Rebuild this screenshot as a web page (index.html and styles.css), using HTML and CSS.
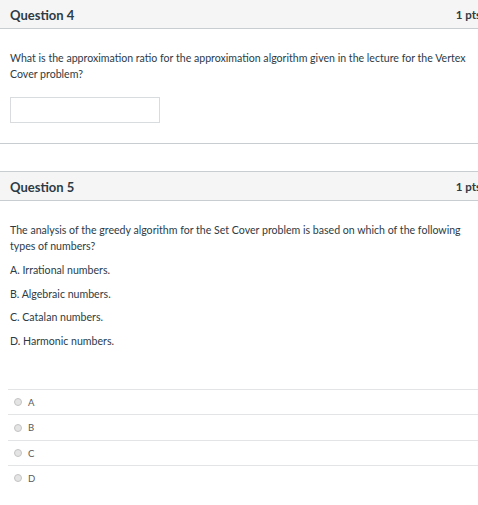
FILE: index.html
```html
<!DOCTYPE html>
<html>
<head>
<meta charset="utf-8">
<link rel="stylesheet" href="styles.css">
</head>
<body>
<div class="page">
  <div class="card first">
    <div class="card-header">
      <span class="q-title">Question 4</span>
      <span class="q-pts">1 pts</span>
    </div>
    <div class="card-body">
      <p class="q-text">What is the approximation ratio for the approximation algorithm given in the lecture for the Vertex Cover problem?</p>
      <div class="answer-input"></div>
    </div>
  </div>

  <div class="card second">
    <div class="card-header">
      <span class="q-title">Question 5</span>
      <span class="q-pts">1 pts</span>
    </div>
    <div class="card-body">
      <p class="q-text">The analysis of the greedy algorithm for the Set Cover problem is based on which of the following types of numbers?</p>
      <div class="choices">
        <p class="choice">A. Irrational numbers.</p>
        <p class="choice">B. Algebraic numbers.</p>
        <p class="choice">C. Catalan numbers.</p>
        <p class="choice">D. Harmonic numbers.</p>
      </div>
      <div class="answers">
        <div class="answer"><span class="radio"></span><span class="label">A</span></div>
        <div class="answer"><span class="radio"></span><span class="label">B</span></div>
        <div class="answer"><span class="radio"></span><span class="label">C</span></div>
        <div class="answer"><span class="radio"></span><span class="label">D</span></div>
      </div>
    </div>
  </div>
</div>
</body>
</html>
```

FILE: styles.css
```css
html, body {
  margin: 0;
  padding: 0;
  background: #ffffff;
  overflow: hidden;
}

body {
  font-family: Lato, "Open Sans", "Liberation Sans", sans-serif;
  color: #2d3b45;
}

.page {
  width: 484px;
  margin-left: -1px;
}

.card {
  border: 1px solid #c7cdd1;
  background: #ffffff;
}

.card.first {
  margin-top: -1px;
}

.card.second {
  margin-top: 27px;
}

.card-header {
  height: 28px;
  background: #f5f5f5;
  border-bottom: 1px solid #c7cdd1;
  display: flex;
  align-items: center;
  justify-content: space-between;
  padding: 0 1px 0 10px;
}

.q-title {
  font-size: 13px;
  font-weight: 700;
  color: #2d3b45;
  padding-top: 1px;
}

.q-pts {
  font-size: 11.5px;
  font-weight: 700;
  color: #2d3b45;
}

.card-body {
  padding: 21px 0 0 10px;
}

.first .card-body {
  padding-bottom: 20px;
}

.q-text {
  margin: 0;
  font-size: 10.6px;
  line-height: 16px;
  padding-right: 6px;
}

.answer-input {
  margin-top: 15px;
  width: 148px;
  height: 24px;
  border: 1px solid #d9dcde;
  background: #ffffff;
}

.choices {
  margin-top: 8px;
  display: flex;
  flex-direction: column;
  gap: 7.7px;
}

.choice {
  margin: 0;
  font-size: 10.6px;
  line-height: 16px;
}

.answers {
  margin-top: 40px;
  margin-left: -2px;
  padding-bottom: 14px;
}

.answer {
  height: 24.4px;
  border-top: 1px solid #e2e4e6;
  display: flex;
  align-items: center;
  padding-left: 6px;
}

.radio {
  width: 6px;
  height: 6px;
  border-radius: 50%;
  border: 1px solid #c4c4c4;
  background: #e4e4e4;
  margin-right: 6px;
}

.label {
  font-size: 9.5px;
  color: #5a5a5a;
}
```
